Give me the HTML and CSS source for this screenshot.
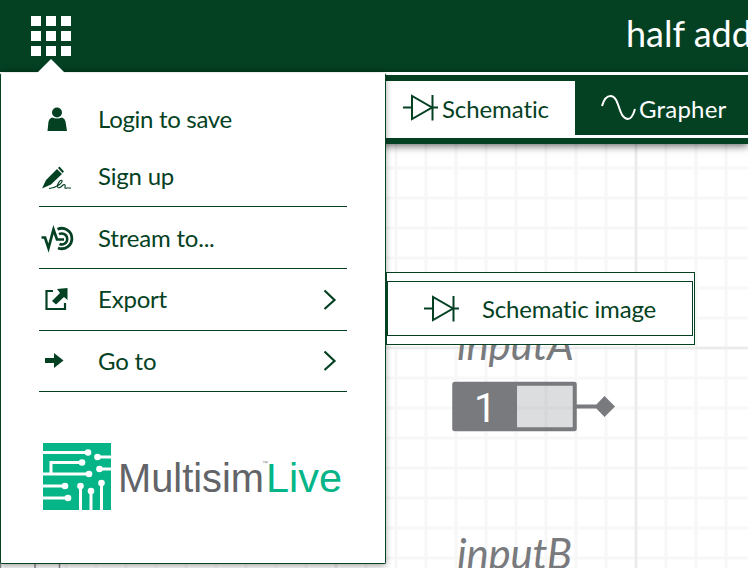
FILE: index.html
```html
<!DOCTYPE html>
<html lang="en">
<head>
<meta charset="utf-8">
<title>half adder</title>
<link rel="stylesheet" href="styles.css">
</head>
<body>
<svg class="defs" width="0" height="0" aria-hidden="true">
  <symbol id="diode" viewBox="0 0 36 28"><path d="M0 13.500H9M28 13.500H35M9 2V25L29 13.500ZM29.500 1V26.500" fill="none" stroke="currentColor" stroke-width="2"/></symbol>
  <symbol id="chevron" viewBox="0 0 14 22"><path d="M1.500 1.500L11.500 11L1.500 20" fill="none" stroke="currentColor" stroke-width="2.200"/></symbol>
</svg>
<header class="header">
  <button class="launcher" aria-label="Menu"><i></i><i></i><i></i><i></i><i></i><i></i><i></i><i></i><i></i></button>
  <h1 class="title">half add</h1>
</header>
<nav class="tabs">
  <a class="tab active"><svg class="diode"><use href="#diode"/></svg><span>Schematic</span></a>
  <a class="tab grapher"><svg class="wave" viewBox="0 0 36 28"><path d="M1 12C3 5 6 2 9.500 2C19 2 17 25 27 25C30 25 32 22 34 15" fill="none" stroke="currentColor" stroke-width="2"/></svg><span>Grapher</span></a>
</nav>
<main class="canvas">
  <svg class="sheet" width="748" height="424" viewBox="0 144 748 424">
    <defs>
      <pattern id="minor" width="30" height="30" x="4.500" y="16.500" patternUnits="userSpaceOnUse"><path d="M1.500 0V30M0 1.500H30" stroke="#f7f7f7" stroke-width="3"/></pattern>
    </defs>
    <rect y="144" width="748" height="424" fill="url(#minor)"/>
    <path d="M336 144V568M636 144V568M0 348H748" stroke="#ebebeb" stroke-width="2.500"/>
    <path d="M0.500 560V568M35 560V568M59.500 560V568" stroke="#888a8e" stroke-width="1.500"/>
    <g class="part">
      <text class="label" x="457" y="360">inputA</text>
      <rect x="516" y="384" width="59" height="45" fill="#787a7e" fill-opacity=".26"/>
      <rect x="454.250" y="383.750" width="120.500" height="45.500" fill="none" stroke="#787a7e" stroke-width="4" rx=".5"/>
      <rect x="454" y="383" width="63" height="46"/>
      <path d="M576 404.500H597V408.500H576ZM594.500 406.500L604.500 396L615 406.500L604.500 417Z"/>
      <text class="digit" x="474" y="422">1</text>
    </g>
    <g class="part"><text class="label" x="457" y="569">inputB</text></g>
  </svg>
</main>
<aside class="menu">
  <ul class="items">
    <li class="item first"><svg class="ico" viewBox="0 0 36 30"><circle cx="18" cy="7.500" r="5"/><path d="M13 12.500Q18 14.500 23 12.500Q26 13.500 26.500 16.500L28 26H8.500L9.500 16.500Q10 13.500 13 12.500Z"/></svg><span>Login to save</span></li>
    <li class="item second"><svg class="ico" viewBox="0 0 36 30"><path d="M3 25.500L7 17L18 6L23 11L12 21.500ZM19 5L20.500 3.500L25 8.500L23.500 10Z"/><path d="M10 25.500C17 25 24 20 23 17.500C21 16 17 23 19 24.500C22 26 24 20 26 22C27 24 24 26 28 25H32" fill="none" stroke="currentColor" stroke-width="1.100"/></svg><span>Sign up</span></li>
    <li class="item stream"><svg class="ico" viewBox="0 0 36 30"><g fill="none" stroke="currentColor"><path d="M2.500 13.500H6L9.500 24L14.500 5.500L18 15.500H25" stroke-width="2.700"/><path d="M18.500 5.200A10.200 10.200 0 1 1 19 24" stroke-width="2.800"/><path d="M20 10.200A5.500 5.500 0 1 1 20.500 20" stroke-width="2.500"/></g></svg><span>Stream to...</span></li>
    <li class="item"><svg class="ico" viewBox="0 0 36 30"><path d="M14 6H7.500V24H26V18" fill="none" stroke="currentColor" stroke-width="2.200"/><path d="M18 4L28.500 3V15L25 12L17 19.500L13 16L21 8Z"/></svg><span>Export</span><svg class="chevron"><use href="#chevron"/></svg></li>
    <li class="item last"><svg class="ico" viewBox="0 0 36 30"><path d="M6 12H15V7L24.500 14.500L15 22V17H6Z"/></svg><span>Go to</span><svg class="chevron"><use href="#chevron"/></svg></li>
  </ul>
  <svg class="brand" viewBox="0 0 302 68">
    <rect width="68" height="67" fill="#05b587"/>
    <path d="M0 9.500H45M68 14H55M8 30V19.500H39M0 31H46M68 26H56M0 43H22M0 55H25M37.500 67V43M48 67V48M58.500 67V41" fill="none" stroke="#fff" stroke-width="3"/>
    <g fill="#fff"><circle cx="45" cy="9.500" r="3.300"/><circle cx="54.500" cy="14" r="3.300"/><circle cx="39" cy="19.500" r="3.300"/><circle cx="56.500" cy="26" r="3.300"/><circle cx="46" cy="31" r="3.300"/><circle cx="22" cy="43" r="3.300"/><circle cx="25" cy="55" r="3.300"/><circle cx="37.500" cy="43" r="3.300"/><circle cx="48" cy="48" r="3.300"/><circle cx="58.500" cy="40" r="3.300"/></g>
    <text class="wordmark" x="75" y="48.500" textLength="146" lengthAdjust="spacingAndGlyphs">Multisim</text>
    <text class="tm" x="219" y="22">™</text>
    <text class="wordmark live" x="223" y="48.500" textLength="76" lengthAdjust="spacingAndGlyphs">Live</text>
  </svg>
</aside>
<div class="submenu"><div class="option"><svg class="diode"><use href="#diode"/></svg><span>Schematic image</span></div></div>
</body>
</html>
```
FILE: styles.css
```css
* { box-sizing: border-box; }
body { margin: 0; width: 748px; height: 568px; overflow: hidden; position: relative; background: #fff; color: #044123; font: 24px/30px Lato, sans-serif; font-variant-ligatures: none; }
.defs { position: absolute; }
.header { height: 72px; background: #044123; display: flex; justify-content: space-between; padding: 16px 0 0 31px; overflow: hidden; }
.launcher { display: grid; grid-template-columns: repeat(3, 10px); grid-auto-rows: 10px; gap: 5px; height: 40px; padding: 0; border: 0; background: none; }
.launcher i { background: #fff; }
.title { margin: -4px 0 0; width: 122px; color: #fff; font-size: 36px; line-height: 42px; font-weight: 400; white-space: nowrap; }
.tabs { height: 72px; border-top: 3px solid #fff; border-bottom: 6px solid #044123; background: #fff; display: flex; padding-left: 386px; box-shadow: 0 2px 8px rgba(0,0,0,.6); position: relative; }
.tab { height: 60px; border-top: 6px solid #044123; display: flex; align-items: center; padding-left: 17px; width: 189px; }
.grapher { background: #044123; color: #fff; width: 173px; padding-left: 26px; }
.tab span { margin-left: 3px; padding-top: 1px; letter-spacing: -.1px; }
.diode, .wave { width: 36px; height: 28px; flex: none; }
.tab .wave + span { margin-left: 2px; letter-spacing: .2px; }
.canvas { height: 424px; }
.sheet { display: block; }
.part { fill: #787a7e; }
.label { font: italic 42px Lato, sans-serif; letter-spacing: -.2px; }
.digit { font: 40px Roboto, sans-serif; fill: #fff; }
.menu { position: absolute; left: 0; top: 73px; width: 386px; height: 491px; background: #fff; border: 1px solid #044123; border-top-color: #fff; border-radius: 2px; box-shadow: 0 2px 6px rgba(0,0,0,.35); padding: 17px 38px 0; }
.menu::before { content: ""; position: absolute; left: 36px; top: -15px; border: 14.500px solid transparent; border-top: 0; border-bottom: 14px solid #fff; }
.items { list-style: none; margin: 0; padding: 0; }
.item { height: 62px; display: flex; align-items: center; border-bottom: 1px solid #044123; }
.first { height: 58px; border: 0; }
.second { height: 58px; }
.last { height: 61px; }
.ico { width: 36px; height: 30px; flex: none; fill: currentColor; }
.stream .ico { margin-top: 3px; }
.item span { margin-left: 23px; letter-spacing: -.2px; }
.first span { margin-top: -2px; letter-spacing: -.3px; }
.second span { margin-top: -4px; }
.item:nth-child(4) span { margin-top: -2px; }
.chevron { width: 14px; height: 22px; margin-left: auto; margin-right: 10px; }
.brand { display: block; width: 302px; height: 68px; margin: 51px 0 0 4px; }
.wordmark { font: 41px "Liberation Sans", sans-serif; fill: #626469; }
.live { fill: #05b587; }
.tm { font: 6px "Liberation Sans", sans-serif; fill: #85878b; }
.submenu { position: absolute; left: 386px; top: 272px; width: 309px; height: 73px; border: 1px solid #044123; background: #fff; padding: 8px 1px 8px 0; }
.option { height: 55px; border: 1px solid #044123; display: flex; align-items: center; padding-left: 36px; }
.option span { margin-left: 22px; letter-spacing: -.15px; }
```
